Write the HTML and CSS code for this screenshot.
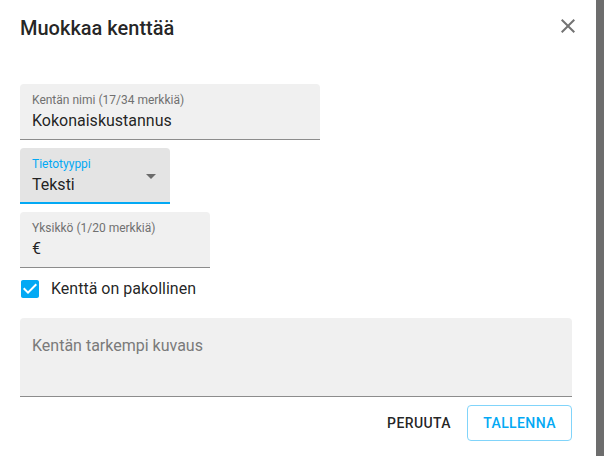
FILE: index.html
```html
<!DOCTYPE html>
<html lang="fi">
<head>
<meta charset="utf-8">
<title>Muokkaa kenttää</title>
<link rel="stylesheet" href="styles.css">
</head>
<body>
<div class="screen">
  <div class="dialog">
    <div class="header">
      <h2 class="title">Muokkaa kenttää</h2>
      <svg class="close" viewBox="0 0 24 24" width="24" height="24"><path d="M19 6.41L17.59 5 12 10.59 6.41 5 5 6.41 10.59 12 5 17.59 6.41 19 12 13.41 17.59 19 19 17.59 13.41 12z"/></svg>
    </div>
    <div class="form">
      <div class="field w300">
        <div class="label">Kentän nimi (17/34 merkkiä)</div>
        <div class="value">Kokonaiskustannus</div>
      </div>
      <div class="field w150 focused">
        <div class="label">Tietotyyppi</div>
        <div class="value">Teksti</div>
        <svg class="arrow" viewBox="0 0 24 24" width="24" height="24"><path d="M7 10l5 5 5-5z"/></svg>
      </div>
      <div class="field w190">
        <div class="label">Yksikkö (1/20 merkkiä)</div>
        <div class="value">€</div>
      </div>
      <label class="check">
        <svg class="box" viewBox="0 0 24 24" width="24" height="24"><path d="M19 3H5c-1.11 0-2 .9-2 2v14c0 1.1.89 2 2 2h14c1.11 0 2-.9 2-2V5c0-1.1-.89-2-2-2zm-9 14l-5-5 1.41-1.41L10 14.170l7.590-7.590L19 8l-9 9z"/></svg>
        <span>Kenttä on pakollinen</span>
      </label>
      <div class="textarea">Kentän tarkempi kuvaus</div>
      <div class="actions">
        <button class="btn text">Peruuta</button>
        <button class="btn outlined">Tallenna</button>
      </div>
    </div>
  </div>
  <div class="backdrop"></div>
</div>
</body>
</html>
```
FILE: styles.css
```css
html, body {
  margin: 0;
  padding: 0;
  height: 100%;
}
body {
  font-family: Roboto, "Liberation Sans", Arial, sans-serif;
  color: rgba(0, 0, 0, 0.87);
}
.screen {
  display: flex;
  height: 456px;
}
.dialog {
  width: 596px;
  background: #fff;
  box-sizing: border-box;
  padding: 0 24px 0 20px;
}
.backdrop {
  flex: 1;
  background: #6d6d6d;
}
.header {
  display: flex;
  justify-content: space-between;
  align-items: flex-start;
  padding-top: 14px;
  height: 26px;
}
.title {
  margin: 2px 0 0;
  font-size: 20px;
  font-weight: 500;
  line-height: 24px;
  color: rgba(0, 0, 0, 0.87);
}
.close {
  fill: #737373;
  margin-right: -8px;
}
.form {
  display: flex;
  flex-direction: column;
  align-items: flex-start;
  margin-top: 44px;
}
.field {
  position: relative;
  box-sizing: border-box;
  height: 56px;
  background: #f0f0f0;
  border-radius: 4px 4px 0 0;
  border-bottom: 1px solid #8c8c8c;
  padding: 8px 12px 0;
  margin-bottom: 8px;
}
.field.focused {
  background: #e4e4e4;
  border-bottom: 2px solid #03a9f4;
}
.w300 { width: 300px; }
.w150 { width: 150px; }
.w190 { width: 190px; }
.label {
  font-size: 12px;
  line-height: 16px;
  color: #707070;
}
.focused .label {
  color: #03a9f4;
}
.value {
  margin-top: 3px;
  font-size: 16px;
  line-height: 19px;
  color: rgba(0, 0, 0, 0.87);
}
.arrow {
  position: absolute;
  right: 7px;
  top: 16px;
  fill: #6b6b6b;
}
.check {
  display: flex;
  align-items: center;
  gap: 9px;
  height: 24px;
  margin: 1px 0 0 -2px;
  font-size: 16px;
  line-height: 24px;
}
.box {
  fill: #03a9f4;
  background: #fff;
}
.textarea {
  align-self: stretch;
  box-sizing: border-box;
  height: 79px;
  margin-top: 17px;
  padding: 18px 12px 0;
  background: #f0f0f0;
  border-radius: 4px 4px 0 0;
  border-bottom: 1px solid #8c8c8c;
  font-size: 16px;
  line-height: 19px;
  color: #7a7a7a;
}
.actions {
  align-self: stretch;
  display: flex;
  justify-content: flex-end;
  align-items: center;
  gap: 8px;
  margin-top: 8px;
}
.btn {
  font-family: Roboto, "Liberation Sans", Arial, sans-serif;
  font-size: 14px;
  font-weight: 500;
  letter-spacing: 0.02857em;
  text-transform: uppercase;
  height: 36px;
  border-radius: 4px;
  background: #fff;
  cursor: pointer;
}
.btn.text {
  border: none;
  padding: 0 8px;
  color: rgba(0, 0, 0, 0.87);
}
.btn.outlined {
  border: 1px solid #81d4fa;
  padding: 0 15px;
  color: #03a9f4;
  width: 105px;
}
```
